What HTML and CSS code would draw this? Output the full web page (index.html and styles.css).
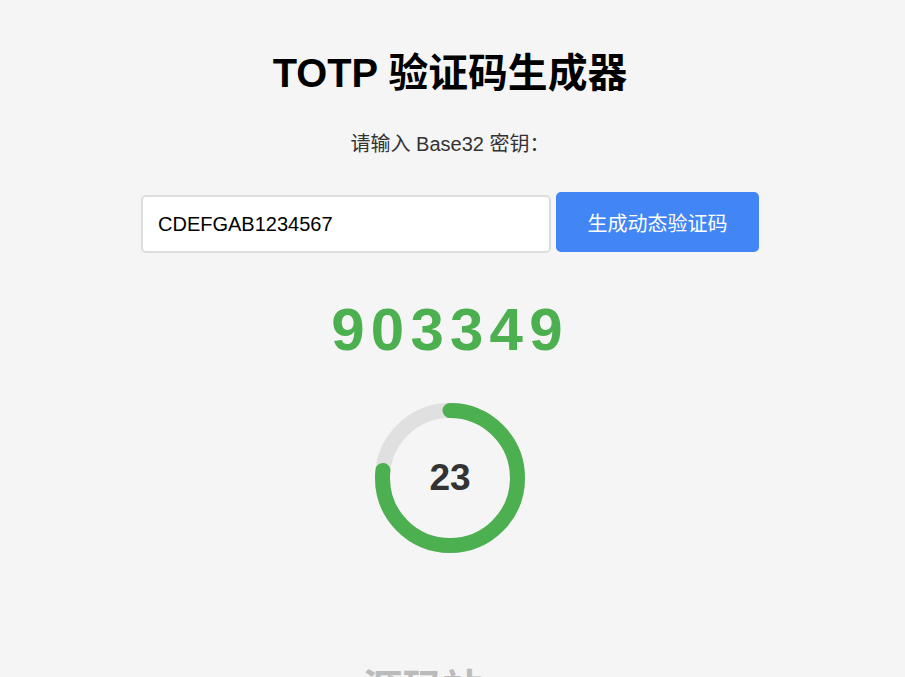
FILE: index.html
```html
<!DOCTYPE html>
<html lang="zh-CN">
<head>
  <meta charset="UTF-8" />
  <meta name="viewport" content="width=device-width, initial-scale=1.0"/>
  <title>TOTP 验证码生成器</title>
  <link rel="stylesheet" href="styles.css">
</head>
<body>

  <div class="container">
    <h1>TOTP 验证码生成器</h1>
    <p class="hint">请输入 Base32 密钥：</p>

    <div class="input-row">
      <input type="text" class="secret-input" value="CDEFGAB1234567">
      <button class="generate-btn">生成动态验证码</button>
    </div>

    <div class="code">903349</div>

    <div class="timer">
      <svg class="timer-ring" width="150" height="150" viewBox="0 0 150 150">
        <circle class="ring-bg" cx="75" cy="75" r="67.5"/>
        <circle class="ring-fg" cx="75" cy="75" r="67.5"/>
      </svg>
      <span class="timer-num">23</span>
    </div>

    <div class="footer-mark">源码站</div>
  </div>

</body>
</html>
```
FILE: styles.css
```css
html, body {
  height: 100%;
  overflow: hidden;
}

body {
  font-family: "Liberation Sans", "Noto Sans CJK SC", sans-serif;
  margin: 0;
  background-color: #f5f5f5;
  color: #333;
}

.container {
  display: flex;
  flex-direction: column;
  align-items: center;
  padding-top: 50px;
  padding-right: 5px;
}

h1 {
  margin: 0;
  font-size: 39.8px;
  line-height: 46px;
  font-weight: bold;
  color: #000;
}

.hint {
  margin: 25px 0 0;
  font-size: 20px;
  line-height: 46px;
}

.input-row {
  display: flex;
  align-items: flex-start;
  gap: 5px;
  margin-top: 25px;
}

.secret-input {
  box-sizing: border-box;
  width: 410px;
  height: 58px;
  margin-top: 3px;
  padding: 0 15px;
  border: 2px solid #ddd;
  border-radius: 5px;
  background-color: #fff;
  color: #000;
  font-family: inherit;
  font-size: 20px;
}

.generate-btn {
  box-sizing: border-box;
  width: 203px;
  height: 60px;
  border: none;
  border-radius: 5px;
  background-color: #4285f4;
  color: #fff;
  font-family: inherit;
  font-size: 20px;
}

.code {
  margin-top: 40px;
  font-size: 60px;
  line-height: 74px;
  font-weight: bold;
  letter-spacing: 6.25px;
  color: #4caf50;
}

.timer {
  position: relative;
  width: 150px;
  height: 150px;
  margin-top: 36px;
  display: flex;
  align-items: center;
  justify-content: center;
}

.timer-ring {
  position: absolute;
  top: 0;
  left: 0;
  transform: rotate(-90deg);
}

.ring-bg,
.ring-fg {
  fill: none;
  stroke-width: 15;
}

.ring-bg {
  stroke: #e0e0e0;
}

.ring-fg {
  stroke: #4caf50;
  stroke-linecap: round;
  stroke-dasharray: 325.2 424.1;
}

.timer-num {
  font-size: 37px;
  font-weight: bold;
}

.footer-mark {
  margin-top: 113px;
  padding-right: 55px;
  font-size: 40px;
  line-height: 46px;
  font-weight: bold;
  color: #bbb;
}
```
